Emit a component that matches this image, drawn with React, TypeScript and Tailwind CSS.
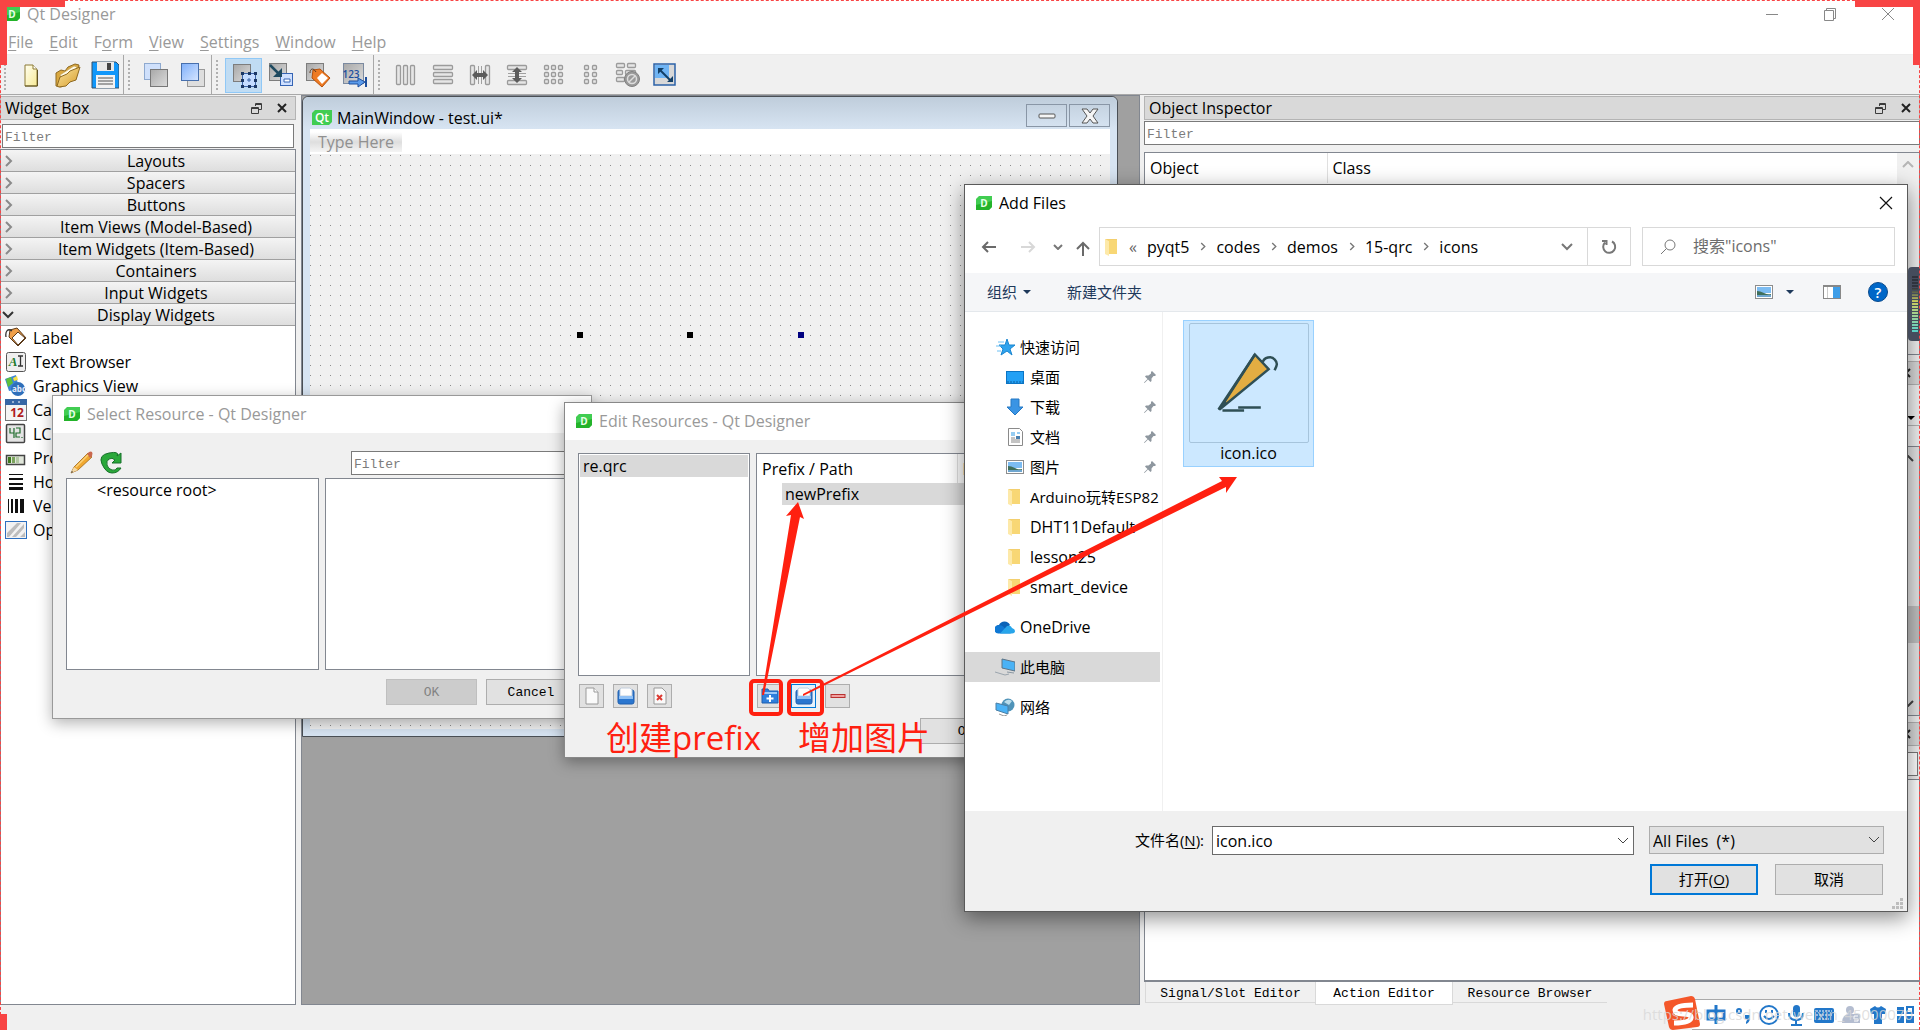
import type { ReactNode } from 'react';

const CATEGORIES = [
  'Layouts',
  'Spacers',
  'Buttons',
  'Item Views (Model-Based)',
  'Item Widgets (Item-Based)',
  'Containers',
  'Input Widgets',
];

const MENUS = ['File', 'Edit', 'Form', 'View', 'Settings', 'Window', 'Help'];

/* ─── Logos ─── */

function DesignerLogo() {
  return (
    <svg viewBox="0 0 16 14" className="w-4 h-[14px] shrink-0">
      <path d="M3 0h13v11l-3 3H0V3z" fill="#41cd52" />
      <path d="M0 9l16-4v6l-3 3H0z" fill="#17a81a" opacity=".7" />
      <text x="8" y="10.500" textAnchor="middle" fontSize="10" fontWeight="700" fill="#e8ffe8">D</text>
    </svg>
  );
}

function QtLogo() {
  return (
    <svg viewBox="0 0 20 15" className="w-5 h-[15px] shrink-0">
      <path d="M3 0h17v12l-3 3H0V3z" fill="#41cd52" />
      <text x="10" y="11.500" textAnchor="middle" fontSize="12" fontWeight="600" fill="#fff">Qt</text>
    </svg>
  );
}

/* ─── Toolbar icons, 28x28 ─── */

function Glyph({ children }: { children: ReactNode }) {
  return (
    <svg viewBox="0 0 28 28" className="w-7 h-7 shrink-0">
      <defs>
        <linearGradient id="gray" x1="0" y1="0" x2="1" y2="1">
          <stop offset="0" stopColor="#a8a8a8" />
          <stop offset="1" stopColor="#dcdcdc" />
        </linearGradient>
        <linearGradient id="blue" x1="0" y1="0" x2="1" y2="1">
          <stop offset="0" stopColor="#7fb0fb" />
          <stop offset="1" stopColor="#d6e5ff" />
        </linearGradient>
        <linearGradient id="gold" x1="0" y1="0" x2="1" y2="1">
          <stop offset="0" stopColor="#fbe7a4" />
          <stop offset="1" stopColor="#d79c2a" />
        </linearGradient>
        <linearGradient id="paper" x1="0" y1="0" x2="1" y2="1">
          <stop offset="0" stopColor="#fffef0" />
          <stop offset="1" stopColor="#f7ea96" />
        </linearGradient>
      </defs>
      {children}
    </svg>
  );
}

const bars = (rects: number[][]) =>
  rects.map(([x, y, w, h]) => (
    <rect key={`${x}-${y}`} x={x + 0.5} y={y + 0.5} width={w} height={h} rx="1" fill="#e6e6e6" stroke="#9b9b9b" strokeWidth="1.3" />
  ));

const NewIcon = () => (
  <Glyph>
    <path d="M8 4h8l4 4v17H8z" fill="url(#paper)" stroke="#8c7a35" />
    <path d="M16 4v4h4" fill="#fff" stroke="#8c7a35" />
    <path d="M8 25h12.500V9" fill="none" stroke="#5f5222" />
  </Glyph>
);
const OpenIcon = () => (
  <Glyph>
    <path d="M2 12l5-3 4 1 3-4 7-3 4 1-3 13-15 9-5-1z" fill="#d9a840" stroke="#8f6a22" />
    <path d="M6 14L20 5l3 1-2 4L8 18z" fill="#fffbe8" stroke="#c5a35a" strokeWidth=".7" />
    <path d="M3 25l3-9 7-3 3-3 10-4-4 13-6 2-4 4-7 1z" fill="url(#gold)" stroke="#8f6a22" />
  </Glyph>
);
const SaveIcon = () => (
  <Glyph>
    <path d="M2 1h23l3 3v23H1V1z" fill="#1197fa" stroke="#35516b" />
    <path d="M6 1h17v9H6z" fill="#e9e9e9" />
    <path d="M16 2h4v7h-4z" fill="#444" />
    <path d="M5 14h19v13H5z" fill="#f2f2f2" />
    <path d="M7 17h15M7 20h15M7 23h15" stroke="#888" strokeWidth="1.300" />
  </Glyph>
);
const BackIcon = () => (
  <Glyph>
    <rect x="2.5" y="2.500" width="16" height="16" fill="#cfe0fb" stroke="#8ea9cf" />
    <rect x="8.500" y="8.500" width="17" height="17" fill="url(#gray)" stroke="#777" />
  </Glyph>
);
const FrontIcon = () => (
  <Glyph>
    <rect x="8.500" y="8.500" width="17" height="17" fill="#dedede" stroke="#999" />
    <rect x="2.500" y="2.500" width="17" height="17" fill="url(#blue)" stroke="#4870ad" />
  </Glyph>
);
const EditWidgetsIcon = () => (
  <Glyph>
    <rect x="3.500" y="3.500" width="17" height="17" fill="url(#gray)" stroke="#7d7d7d" />
    <rect x="12.500" y="12.500" width="13" height="13" fill="#c4dcff" stroke="#3b64a8" />
    <path d="M11 11h3v3h-3zM18 11h3v3h-3zM24 11h3v3h-3zM11 18h3v3h-3zM24 18h3v3h-3zM11 24h3v3h-3zM18 24h3v3h-3zM24 24h3v3h-3z" fill="#1b3763" />
    <path d="M17 19h4M19 17v4" stroke="#3b64a8" />
  </Glyph>
);
const SignalIcon = () => (
  <Glyph>
    <rect x="2.500" y="2.500" width="17" height="17" fill="url(#gray)" stroke="#7d7d7d" />
    <rect x="13.500" y="12.500" width="12" height="12" fill="#cfe0ff" stroke="#3564b4" />
    <path d="M17 18h6v3h-6z" fill="#fff" stroke="#3564b4" />
    <path d="M3 4l9 9" stroke="#1f4a60" strokeWidth="2.500" />
    <path d="M15 16V7l-9 9z" fill="#1f4a60" />
  </Glyph>
);
const BuddyIcon = () => (
  <Glyph>
    <rect x="2.500" y="2.500" width="17" height="17" fill="url(#gray)" stroke="#7d7d7d" />
    <path d="M9 9l7-1 10 9-8 9-10-9z" fill="#ee7a22" stroke="#b5510c" />
    <path d="M18 12l6 5-6 6-5-6z" fill="#fff" />
    <path d="M12 11C9 6 6 8 6 12" fill="none" stroke="#5a3a22" />
  </Glyph>
);
const TabOrderIcon = () => (
  <Glyph>
    <rect x="2.500" y="2.500" width="20" height="20" fill="url(#gray)" stroke="#7b8aa0" />
    <text x="10" y="17" textAnchor="middle" fontSize="10" fontWeight="600" fill="#1d4f9e">123</text>
    <path d="M8 20h9v-3l7 4-7 5v-3H8z" fill="#5b9bea" stroke="#1d4f9e" />
    <path d="M25 16v10" stroke="#1d4f9e" strokeWidth="2" />
  </Glyph>
);
const HLayoutIcon = () => <Glyph>{bars([[4, 4, 4, 19], [11, 4, 4, 19], [18, 4, 4, 19]])}</Glyph>;
const VLayoutIcon = () => <Glyph>{bars([[4, 4, 19, 4], [4, 11, 19, 4], [4, 18, 19, 4]])}</Glyph>;
const HSplitIcon = () => (
  <Glyph>
    {bars([[4, 4, 4, 19], [19, 4, 4, 19]])}
    <path d="M12.500 5v18M15.500 5v18" stroke="#a0a0a0" />
    <path d="M6 14l5-5v3h6V9l5 5-5 5v-3h-6v3z" fill="#5c5c5c" />
  </Glyph>
);
const VSplitIcon = () => (
  <Glyph>
    {bars([[4, 4, 19, 4], [4, 19, 19, 4]])}
    <path d="M5 12.500h18M5 15.500h18" stroke="#a0a0a0" />
    <path d="M14 6l5 5h-3v6h3l-5 5-5-5h3v-6H9z" fill="#5c5c5c" />
  </Glyph>
);
const GridIcon = () => (
  <Glyph>
    {bars([4, 11, 18].flatMap((y) => [4, 11, 18].map((x) => [x, y, 4, 4])))}
  </Glyph>
);
const FormIcon = () => (
  <Glyph>{bars([4, 11, 18].flatMap((y) => [[7, y, 4, 4], [15, y, 4, 4]]))}</Glyph>
);
const BreakIcon = () => (
  <Glyph>
    {bars([[2, 2, 8, 4], [13, 2, 8, 4], [2, 9, 6, 4], [11, 9, 10, 4], [2, 16, 8, 4]])}
    <circle cx="18" cy="18" r="7.500" fill="#9a9a9a" stroke="#808080" />
    <circle cx="18" cy="18" r="4.500" fill="none" stroke="#ddd" strokeWidth="1.500" />
    <path d="M15 21l6-6" stroke="#ddd" strokeWidth="1.500" />
  </Glyph>
);
const AdjustIcon = () => (
  <Glyph>
    <rect x="3" y="3" width="21" height="21" fill="#d8d8d8" stroke="#2b62a8" strokeWidth="1.500" />
    <path d="M4 4h14v13H4z" fill="#6fb4f4" />
    <path d="M9 9l10 10" stroke="#123f66" strokeWidth="2" />
    <path d="M7 7v6l6-6zM22 21v-6l-6 6z" fill="#123f66" />
  </Glyph>
);

const TOOL_GROUPS = [
  [
    { name: 'New', Icon: NewIcon },
    { name: 'Open', Icon: OpenIcon },
    { name: 'Save', Icon: SaveIcon },
  ],
  [
    { name: 'Send to Back', Icon: BackIcon },
    { name: 'Bring to Front', Icon: FrontIcon },
  ],
  [
    { name: 'Edit Widgets', Icon: EditWidgetsIcon, active: true },
    { name: 'Edit Signals/Slots', Icon: SignalIcon },
    { name: 'Edit Buddies', Icon: BuddyIcon },
    { name: 'Edit Tab Order', Icon: TabOrderIcon },
  ],
  [
    { name: 'Lay Out Horizontally', Icon: HLayoutIcon },
    { name: 'Lay Out Vertically', Icon: VLayoutIcon },
    { name: 'Horizontal Splitter', Icon: HSplitIcon },
    { name: 'Vertical Splitter', Icon: VSplitIcon },
    { name: 'Lay Out in a Grid', Icon: GridIcon },
    { name: 'Lay Out in a Form', Icon: FormIcon },
    { name: 'Break Layout', Icon: BreakIcon },
    { name: 'Adjust Size', Icon: AdjustIcon },
  ],
];

/* ─── Widget box icons, 22x22 ─── */

const WIDGETS: { name: string; icon: ReactNode }[] = [
  {
    name: 'Label',
    icon: (
      <>
        <path d="M5 3l7-2 9 10-8 8-9-9z" fill="#f0a04a" stroke="#5b3a1a" />
        <path d="M13 5l7 6-7 7-6-7z" fill="#fff" stroke="#5b3a1a" />
        <path d="M7 4C3 1 0 4 1 10" fill="none" stroke="#333" strokeWidth="1.300" />
      </>
    ),
  },
  {
    name: 'Text Browser',
    icon: (
      <>
        <rect x="1.500" y="1.500" width="19" height="19" rx="2" fill="#eee" stroke="#555" />
        <text x="8" y="15" textAnchor="middle" fontSize="13" fontStyle="italic" fontWeight="700" className="font-['Liberation_Serif',serif]" fill="#1c7a2c">A</text>
        <path d="M13 5h5M13 15h5M15.500 5v10" stroke="#333" strokeWidth="1.300" />
      </>
    ),
  },
  {
    name: 'Graphics View',
    icon: (
      <>
        <path d="M0 4l11-4 3 14-10 2z" fill="#3c86d8" />
        <path d="M1 4l5-2 2 6-5 4z" fill="#5fc03a" />
        <path d="M8 3l4-2 1 4-4 1z" fill="#f5e04a" />
        <circle cx="13" cy="14" r="7" fill="#2f6fba" />
        <text x="14" y="17" textAnchor="middle" fontSize="8" fontWeight="700" fill="#e8eefc">abc</text>
      </>
    ),
  },
  {
    name: 'Cal',
    icon: (
      <>
        <rect x=".500" y=".500" width="21" height="21" fill="#f4f4f4" stroke="#777" />
        <path d="M0 0h22v6H0z" fill="#3566a5" />
        <path d="M7 3h2M13 3h2" stroke="#fff" />
        <text x="12" y="18" textAnchor="middle" fontSize="12" fontWeight="700" fill="#b01c1c">12</text>
      </>
    ),
  },
  {
    name: 'LCD',
    icon: (
      <>
        <rect x="1.500" y="1.500" width="18" height="18" rx="1" fill="#e4e4e4" stroke="#444" strokeWidth="1.500" />
        <path d="M5 5v5h4M9 5v10M11 5h4v5h-4v4h4M17 14v1" fill="none" stroke="#1d6b2a" strokeWidth="1.200" />
      </>
    ),
  },
  {
    name: 'Pro',
    icon: (
      <>
        <rect x="1.500" y="8.500" width="18" height="9" fill="#e0e6da" stroke="#444" strokeWidth="1.500" />
        <path d="M3 10h3v6H3z" fill="#3f7a1c" />
        <path d="M7 10h3v6H7z" fill="#7ba35e" />
        <path d="M11 10h3v6h-3z" fill="#b3c8a4" />
      </>
    ),
  },
  {
    name: 'Ho',
    icon: <path d="M4 3h14v1H4zM4 7h14v2H4zM4 12h14v2H4zM4 16h14v3H4z" fill="#111" />,
  },
  {
    name: 'Ve',
    icon: <path d="M3 4h1v14H3zM6 4h2v14H6zM10 4h3v14h-3zM15 4h4v14h-4z" fill="#111" />,
  },
  {
    name: 'Op',
    icon: (
      <>
        <rect x=".500" y="2.500" width="21" height="17" fill="#f2f2f2" stroke="#2c6fc0" />
        <path d="M2 14L12 4h4L4 18H2zM7 18L19 5v4l-8 9zM15 18l5-5v5z" fill="#bdbdbd" />
      </>
    ),
  },
];

/* ─── Dock pieces ─── */

function DockHeader({ title }: { title: string }) {
  return (
    <div className="flex h-6 shrink-0 items-center border border-[#b4b4b4] bg-[#d9d9d9] px-1">
      <span className="flex-1">{title}</span>
      <button type="button" aria-label="Float" className="mr-[10px] flex h-5 w-4 items-center justify-center">
        <svg viewBox="0 0 11 11" className="h-[11px] w-[11px]" fill="none" stroke="#3c3c3c">
          <path d="M4.500 3V.500h6v6H8M4 1.500h7" />
          <path d="M.500 4.500h7v6h-7zM0 5.500h8" />
        </svg>
      </button>
      <button type="button" aria-label="Close" className="mr-px flex h-5 w-4 items-center justify-center">
        <svg viewBox="0 0 10 10" className="h-[10px] w-[10px]" stroke="#222" strokeWidth="2">
          <path d="M1 1l8 8M9 1l-8 8" />
        </svg>
      </button>
    </div>
  );
}

function FilterBox({ label }: { label: string }) {
  return (
    <input
      type="text"
      aria-label={label}
      placeholder="Filter"
      className="block h-6 w-full border border-[#7a7a7a] bg-white px-[2px] pt-[2px] font-['Liberation_Mono',monospace] text-[13px] outline-none placeholder:text-[#7c7c7c]"
    />
  );
}

function WidgetBox() {
  return (
    <aside className="flex w-[296px] shrink-0 flex-col pt-px">
      <DockHeader title="Widget Box" />
      <div className="px-[2px] pt-1 pb-px">
        <FilterBox label="Widget filter" />
      </div>
      <div className="min-h-0 flex-1 overflow-hidden border border-[#828790] bg-white">
        {CATEGORIES.map((c) => (
          <button
            key={c}
            type="button"
            className="flex h-[22px] w-full items-center border-b border-[#a0a0a0] bg-linear-to-b from-[#f4f4f4] to-[#dedede]"
          >
            <svg viewBox="0 0 16 12" className="h-3 w-4 shrink-0" fill="none" stroke="#8a8a8a" strokeWidth="2">
              <path d="M5 1l5 5-5 5" />
            </svg>
            <span className="flex-1">{c}</span>
          </button>
        ))}
        <button
          type="button"
          className="flex h-[22px] w-full items-center border-b border-[#a0a0a0] bg-linear-to-b from-[#f4f4f4] to-[#dedede]"
        >
          <svg viewBox="0 0 16 12" className="h-3 w-4 shrink-0" fill="none" stroke="#333" strokeWidth="2">
            <path d="M2 3l5 5 5-5" />
          </svg>
          <span className="flex-1">Display Widgets</span>
        </button>
        <ul>
          {WIDGETS.map((w) => (
            <li key={w.name} className="flex h-6 items-center gap-[6px] pl-1">
              <svg viewBox="0 0 22 22" className="h-[22px] w-[22px] shrink-0">{w.icon}</svg>
              <span>{w.name}</span>
            </li>
          ))}
        </ul>
      </div>
    </aside>
  );
}

function FormWindow() {
  return (
    <section className="absolute top-0 left-0 flex h-[641px] w-[816px] flex-col rounded-t-md border border-[#4a4f55] bg-[#d7e4f2] px-[7px] pb-[7px]">
      <header className="-mx-[7px] flex h-8 shrink-0 items-center rounded-t-md bg-linear-to-b from-[#bfcddb] to-[#d7e4f2] pt-[5px] pr-[7px] pl-[9px]">
        <h2 className="flex flex-1 items-center gap-[5px] pt-1">
          <QtLogo />
          MainWindow - test.ui*
        </h2>
        <div className="flex gap-[2px]">
          <button type="button" aria-label="Minimize" className="flex h-[23px] w-[41px] items-center justify-center border border-[#8996a6]">
            <svg viewBox="0 0 18 6" className="h-[6px] w-[18px]">
              <rect x="1" y="1" width="16" height="4" rx="1" fill="#f5f5f5" stroke="#555" />
            </svg>
          </button>
          <button type="button" aria-label="Close" className="flex h-[23px] w-[41px] items-center justify-center border border-[#8996a6]">
            <svg viewBox="0 0 18 16" className="h-4 w-[18px]">
              <path d="M1 1h5l3 4 3-4h5l-5 7 5 7h-5l-3-4-3 4H1l5-7z" fill="#f5f5f5" stroke="#555" />
            </svg>
          </button>
        </div>
      </header>
      <div className="flex h-[25px] shrink-0 items-center bg-white">
        <button type="button" className="h-5 bg-linear-to-b from-white via-[#dedede] to-[#f4f4f4] px-2 leading-5 text-[#909090]">
          Type Here
        </button>
      </div>
      <div className="relative flex-1 overflow-hidden bg-[#f0f0f0]">
        <svg className="absolute inset-0 h-full w-full">
          <defs>
            <pattern id="dots" width="10" height="10" patternUnits="userSpaceOnUse">
              <rect x="0" y="1" width="1" height="1" fill="#8d8d8d" />
            </pattern>
          </defs>
          <rect width="100%" height="100%" fill="url(#dots)" />
          <rect x="267" y="178" width="6" height="6" fill="#000" />
          <rect x="377" y="178" width="6" height="6" fill="#000" />
          <rect x="488" y="178" width="6" height="6" fill="#000080" />
        </svg>
      </div>
    </section>
  );
}

function RightDock() {
  return (
    <aside className="ml-1 flex w-[776px] shrink-0 flex-col pt-px">
      <div className="flex h-[265px] shrink-0 flex-col pb-[6px]">
        <DockHeader title="Object Inspector" />
        <div className="pt-px pb-[7px]">
          <FilterBox label="Object filter" />
        </div>
        <div className="flex min-h-0 flex-1 items-start border border-[#828790] bg-white">
          <table className="flex-1 table-fixed border-collapse text-left">
            <thead>
              <tr className="h-[30px]">
                <th className="w-[182px] border-r border-[#e0e0e0] pl-[5px] font-normal">Object</th>
                <th className="pl-[5px] font-normal">Class</th>
              </tr>
            </thead>
          </table>
          <div className="flex w-[22px] justify-center self-stretch bg-[#f0f0f0] pt-2">
            <svg viewBox="0 0 12 7" className="h-[7px] w-3" fill="none" stroke="#b5b5b5" strokeWidth="2">
              <path d="M1 6l5-5 5 5" />
            </svg>
          </div>
        </div>
      </div>
      <div className="flex h-[361px] shrink-0 flex-col pb-[6px]">
        <DockHeader title="" />
        <div className="flex flex-1 items-end justify-end border-b border-[#b4b4b4] pr-[5px] pb-[5px]">
          <svg viewBox="0 0 8 4" className="h-1 w-2"><path d="M0 0h8L4 4z" /></svg>
        </div>
        <div className="h-5" />
        <div className="flex h-[270px] justify-end border border-[#828790] bg-white">
          <div className="flex w-[22px] flex-col items-center bg-[#e4e4e4] py-2">
            <svg viewBox="0 0 12 7" className="h-[7px] w-3" fill="none" stroke="#444" strokeWidth="2">
              <path d="M1 6l5-5 5 5" />
            </svg>
            <div className="mt-36 h-[37px] w-full bg-[#c0c0c0]" />
            <svg viewBox="0 0 12 7" className="mt-auto h-[7px] w-3" fill="none" stroke="#444" strokeWidth="2">
              <path d="M1 1l5 5 5-5" />
            </svg>
          </div>
        </div>
      </div>
      <div className="flex min-h-0 flex-1 flex-col">
        <DockHeader title="" />
        <div className="pt-[6px] pr-[2px] pb-[3px]">
          <div className="h-6 border border-[#7a7a7a] bg-white" />
        </div>
        <div className="flex-1 border border-[#828790] border-b-2 bg-white" />
      </div>
      <div role="tablist" className="flex h-[23px] shrink-0 items-start pl-px font-['Liberation_Mono',monospace] text-[13px]">
        <button type="button" role="tab" className="h-[21px] w-[170px] border-b border-l border-[#d9d9d9] pt-[2px]">Signal/Slot Editor</button>
        <button type="button" role="tab" aria-selected className="h-[23px] w-[138px] border-r border-b border-l border-[#d9d9d9] bg-white pt-[2px]">Action Editor</button>
        <button type="button" role="tab" className="h-[21px] w-[154px] border-b border-[#d9d9d9] pt-[2px]">Resource Browser</button>
      </div>
    </aside>
  );
}

/* ─── Select Resource dialog ─── */

function SelectResourceDialog() {
  return (
    <section className="absolute top-[395px] left-[52px] flex h-[324px] w-[540px] flex-col border border-[#999] bg-[#f0f0f0] shadow-[0_4px_14px_rgba(0,0,0,0.3)]">
      <header className="flex h-[37px] shrink-0 items-center gap-[7px] bg-white pb-[2px] pl-[11px] text-[#999]">
        <DesignerLogo />
        <h2>Select Resource - Qt Designer</h2>
      </header>
      <div className="flex items-end justify-between px-[13px] pt-[18px]">
        <div className="flex gap-[6px] pl-1">
          <button type="button" aria-label="Edit Resources">
            <svg viewBox="0 0 24 24" className="h-6 w-6">
              <path d="M1 22l3-6L18 2l4 4L8 19z" fill="#f0a830" stroke="#a0671a" strokeWidth=".8" />
              <path d="M17 3l2-2q2-1 3 0t0 4l-2 2z" fill="#c9684f" />
              <path d="M1 22l3-6 4 3z" fill="#f3d9a8" />
              <path d="M1 22l1-2 1 1z" fill="#333" />
              <path d="M6 16L18 4" stroke="#fbd27a" strokeWidth="1.500" />
            </svg>
          </button>
          <button type="button" aria-label="Reload">
            <svg viewBox="0 0 24 24" className="h-6 w-6">
              <path d="M21 2v10h-9l3-3q-3-3-6-1t-2 6 5 5 5-2h4q-3 5-9 5T2 13 9 2t8 3z" fill="#2aa83a" stroke="#17702a" />
            </svg>
          </button>
        </div>
        <div className="w-[227px]">
          <FilterBox label="Resource filter" />
        </div>
      </div>
      <div className="grid h-[195px] grid-cols-[253px_1fr] gap-[6px] px-[13px] pt-[3px]">
        <div className="border border-[#828790] bg-white pl-[30px] leading-[23px]">&lt;resource root&gt;</div>
        <div className="border border-[#828790] bg-white" />
      </div>
      <div className="flex justify-end gap-[9px] pt-[9px] pr-[15px] font-['Liberation_Mono',monospace] text-[13px]">
        <button type="button" disabled className="h-[26px] w-[91px] border border-[#bfbfbf] bg-[#ccc] pt-[2px] text-[#838383]">OK</button>
        <button type="button" className="h-[26px] w-[90px] border border-[#adadad] bg-[#e1e1e1] pt-[2px]">Cancel</button>
      </div>
    </section>
  );
}

/* ─── Edit Resources dialog ─── */

const TrayIcon = () => (
  <>
    <path d="M1 5q0-2 2-2h12q2 0 2 2v10q0 2-2 2H3q-2 0-2-2z" fill="#2a76cf" stroke="#1f5fae" />
    <path d="M4 1h9l2 2v6H3V2z" fill="#fdfdfd" stroke="#c2cedd" />
    <path d="M2 9h14v3H2z" fill="#8fc0f5" />
  </>
);

function ResourceButton({ label, focused, children }: { label: string; focused?: boolean; children: ReactNode }) {
  return (
    <button
      type="button"
      aria-label={label}
      className={`flex h-6 w-[25px] items-center justify-center border ${focused ? 'border-[#0078d7] bg-[#e5f1fb]' : 'border-[#adadad] bg-[#e1e1e1]'}`}
    >
      <svg viewBox="0 0 18 18" className="h-[18px] w-[18px]">{children}</svg>
    </button>
  );
}

function EditResourcesDialog() {
  return (
    <section className="absolute top-[402px] left-[564px] flex h-[356px] w-[560px] flex-col border border-[#888] bg-[#f0f0f0] shadow-[0_4px_14px_rgba(0,0,0,0.35)]">
      <header className="flex h-[37px] shrink-0 items-center gap-[7px] bg-white pb-[2px] pl-[11px] text-[#999]">
        <DesignerLogo />
        <h2>Edit Resources - Qt Designer</h2>
      </header>
      <div className="grid grid-cols-[172px_1fr] gap-[6px] px-[13px] pt-[13px]">
        <div className="flex flex-col gap-2">
          <ul className="h-[223px] border border-[#828790] bg-white p-px">
            <li className="h-[22px] bg-[#d9d9d9] pl-[3px] leading-[22px]">re.qrc</li>
          </ul>
          <div className="flex gap-[9px] pl-px">
            <ResourceButton label="New resource file">
              <path d="M3 1h8l4 4v12H3z" fill="#fafafa" stroke="#999" />
              <path d="M11 1v4h4" fill="#fff" stroke="#999" />
            </ResourceButton>
            <ResourceButton label="Open resource file"><TrayIcon /></ResourceButton>
            <ResourceButton label="Remove resource file">
              <path d="M3 1h8l4 4v12H3z" fill="#fafafa" stroke="#999" />
              <path d="M6 8l5 5M11 8l-5 5" stroke="#dc3a32" strokeWidth="2" />
            </ResourceButton>
          </div>
        </div>
        <div className="flex flex-col gap-2">
          <div className="h-[223px] border border-[#828790] bg-white">
            <table className="w-full table-fixed border-collapse text-left">
              <thead>
                <tr className="h-[29px]">
                  <th className="w-[200px] border-r border-[#e0e0e0] pl-[5px] font-normal">Prefix / Path</th>
                  <th className="pl-[5px] font-normal">L</th>
                </tr>
              </thead>
              <tbody>
                <tr className="h-[22px]">
                  <td colSpan={2} className="pl-[25px]">
                    <div className="bg-[#d9d9d9] pl-[3px] leading-[22px]">newPrefix</div>
                  </td>
                </tr>
              </tbody>
            </table>
          </div>
          <div className="flex gap-[9px] pl-px">
            <ResourceButton label="Add Prefix">
              <path d="M1 2h6l1 2h9v12H1z" fill="#2f7fdc" stroke="#1f5fae" />
              <path d="M2 5h14v2H2z" fill="#9cc8f8" />
              <path d="M9 8v7M5.500 11.500h7" stroke="#fff" strokeWidth="2" />
            </ResourceButton>
            <ResourceButton label="Add Files" focused><TrayIcon /></ResourceButton>
            <ResourceButton label="Remove">
              <rect x="2" y="7.500" width="14" height="3" fill="#f0a0a0" stroke="#b8312f" />
            </ResourceButton>
          </div>
        </div>
      </div>
      <div className="flex justify-end gap-[9px] pt-[10px] pr-[13px] font-['Liberation_Mono',monospace] text-[13px]">
        <button type="button" className="h-[26px] w-[91px] border border-[#adadad] bg-[#e1e1e1] pt-[2px]">OK</button>
        <button type="button" className="h-[26px] w-[90px] border border-[#adadad] bg-[#e1e1e1] pt-[2px]">Cancel</button>
      </div>
    </section>
  );
}

/* ─── Add Files dialog ─── */

const CRUMBS = ['pyqt5', 'codes', 'demos', '15-qrc', 'icons'];

const FolderArt = () => (
  <>
    <path d="M2 1h12v15h-4z" fill="#f3cf6e" />
    <path d="M6 2h8v14H6z" fill="#f8d775" />
    <path d="M2 1l4 2v15l-4-2z" fill="#fde9a9" />
  </>
);

function PictureArt() {
  return (
    <>
      <rect x=".500" y="2.500" width="17" height="13" fill="#fff" stroke="#8d8d8d" />
      <path d="M2 4h14v6H2z" fill="#7cbcf2" />
      <path d="M2 8q3 0 7 2t7 1v2H2z" fill="#3f6f5c" />
      <path d="M2 12h14v2H2z" fill="#6fa6cf" />
    </>
  );
}

const PLACES: { name: string; pinned?: boolean; small?: boolean; icon: ReactNode }[] = [
  {
    name: '桌面',
    pinned: true,
    small: true,
    icon: (
      <>
        <rect x=".500" y="3.500" width="17" height="12" fill="#22a0f5" stroke="#0b74c4" />
        <path d="M1 14h16" stroke="#0c5e9e" strokeDasharray="2 1" />
      </>
    ),
  },
  {
    name: '下载',
    pinned: true,
    small: true,
    icon: <path d="M5 1h8v8h4l-8 8-8-8h4z" fill="#3a94e4" stroke="#2478c4" />,
  },
  {
    name: '文档',
    pinned: true,
    small: true,
    icon: (
      <>
        <path d="M2.500 .500h11l3 3v14h-14z" fill="#fff" stroke="#8a8a8a" />
        <path d="M5 5h4M5 7h4M11 5h3" stroke="#2e9be6" />
        <path d="M5 10h4M5 12h9M5 14h9" stroke="#888" />
        <path d="M10 8h4v3h-4z" fill="#4a80b0" />
      </>
    ),
  },
  { name: '图片', pinned: true, small: true, icon: <PictureArt /> },
  { name: 'Arduino玩转ESP82', small: true, icon: <FolderArt /> },
  { name: 'DHT11Default', icon: <FolderArt /> },
  { name: 'lesson25', icon: <FolderArt /> },
  { name: 'smart_device', icon: <FolderArt /> },
];

const Crumb = () => (
  <svg viewBox="0 0 6 10" className="h-[9px] w-[6px]" fill="none" stroke="#777" strokeWidth="1.500">
    <path d="M1 1l4 4-4 4" />
  </svg>
);

function AddFilesDialog() {
  return (
    <section className="absolute top-[184px] left-[964px] flex h-[728px] w-[944px] flex-col border border-[#5a5a5a] bg-white shadow-[0_6px_20px_rgba(0,0,0,0.45)]">
      <header className="flex h-[38px] shrink-0 items-center gap-[7px] pr-[14px] pb-[2px] pl-[11px]">
        <DesignerLogo />
        <h2 className="flex-1">Add Files</h2>
        <button type="button" aria-label="Close">
          <svg viewBox="0 0 14 14" className="h-[14px] w-[14px]" stroke="#111" strokeWidth="1.200">
            <path d="M1 1l12 12M13 1L1 13" />
          </svg>
        </button>
      </header>

      <div className="flex h-[50px] shrink-0 items-center pt-[4px] pr-3 pb-[7px] pl-4">
        <div className="flex w-[118px] items-center">
          <button type="button" aria-label="Back">
            <svg viewBox="0 0 16 16" className="h-4 w-4" fill="none" stroke="#6a6a6a" strokeWidth="2">
              <path d="M15 8H2M7 3L2 8l5 5" />
            </svg>
          </button>
          <button type="button" aria-label="Forward" className="ml-[23px]">
            <svg viewBox="0 0 16 16" className="h-4 w-4" fill="none" stroke="#d8d8d8" strokeWidth="2">
              <path d="M1 8h13M9 3l5 5-5 5" />
            </svg>
          </button>
          <button type="button" aria-label="Recent" className="ml-[17px]">
            <svg viewBox="0 0 10 6" className="h-[6px] w-[10px]" fill="none" stroke="#777" strokeWidth="2">
              <path d="M1 1l4 4 4-4" />
            </svg>
          </button>
          <button type="button" aria-label="Up" className="ml-3 pt-1">
            <svg viewBox="0 0 16 16" className="h-4 w-4" fill="none" stroke="#6a6a6a" strokeWidth="2">
              <path d="M8 15V2M2 8l6-6 6 6" />
            </svg>
          </button>
        </div>
        <nav className="flex h-[39px] flex-1 items-center border border-[#d9d9d9] pl-[3px]">
          <svg viewBox="0 0 18 18" className="h-[18px] w-[18px]"><FolderArt /></svg>
          <span className="mr-[10px] ml-2 text-[#666]">«</span>
          {CRUMBS.map((c, i) => (
            <span key={c} className="flex items-center">
              {i > 0 && <span className="mr-[10px] ml-[11px]"><Crumb /></span>}
              <a href="#">{c}</a>
            </span>
          ))}
          <button type="button" aria-label="Previous locations" className="mr-[14px] ml-auto">
            <svg viewBox="0 0 12 8" className="h-2 w-3" fill="none" stroke="#777" strokeWidth="2">
              <path d="M1 1l5 5 5-5" />
            </svg>
          </button>
          <button type="button" aria-label="Refresh" className="flex h-full w-[43px] items-center justify-center border-l border-[#d9d9d9]">
            <svg viewBox="0 0 16 16" className="h-4 w-4" fill="none" stroke="#777" strokeWidth="2">
              <path d="M11 2.500A6 6 0 1 1 4 3.500M1 2h4.500v4" />
            </svg>
          </button>
        </nav>
        <label className="ml-[11px] flex h-[39px] w-[253px] items-center border border-[#d9d9d9] pl-[17px]">
          <svg viewBox="0 0 16 16" className="h-4 w-4 shrink-0" fill="none" stroke="#777">
            <circle cx="10" cy="6" r="5" />
            <path d="M6.500 9.500L1 15" />
          </svg>
          <input type="search" aria-label="Search" placeholder={'搜索"icons"'} className="w-40 pb-px pl-[17px] outline-none placeholder:text-[#6d6d6d]" />
        </label>
      </div>

      <div className="flex h-[39px] shrink-0 items-center border-b border-[#e4e8ec] bg-[#f5f6f8] pr-[19px] pl-[22px] text-[15px] text-[#1e395b]">
        <button type="button" className="flex items-center gap-[6px]">
          组织
          <svg viewBox="0 0 8 4" className="h-1 w-2" fill="#1e395b"><path d="M0 0h8L4 4z" /></svg>
        </button>
        <button type="button" className="mr-auto ml-9">新建文件夹</button>
        <button type="button" aria-label="View" className="flex items-center gap-[13px]">
          <svg viewBox="0 0 18 18" className="h-[18px] w-[18px]"><PictureArt /></svg>
          <svg viewBox="0 0 8 4" className="h-1 w-2" fill="#1e395b"><path d="M0 0h8L4 4z" /></svg>
        </button>
        <button type="button" aria-label="Preview pane" className="ml-[29px]">
          <svg viewBox="0 0 18 14" className="h-[14px] w-[18px]">
            <rect x=".500" y=".500" width="17" height="13" fill="#fff" stroke="#888" />
            <path d="M0 0h18v2H0z" fill="#888" />
            <path d="M4.500 2v11" stroke="#ccc" />
            <path d="M10 2h7v11h-7z" fill="#3f9ee8" />
          </svg>
        </button>
        <button type="button" aria-label="Help" className="ml-[27px] flex h-5 w-5 items-center justify-center rounded-full border border-[#0a4a8c] bg-[#0067c8] font-semibold text-white">
          ?
        </button>
      </div>

      <div className="flex min-h-0 flex-1">
        <nav className="w-[198px] shrink-0 border-r border-[#f0f0f0] pt-5 pr-[2px]">
          <div className="flex h-[30px] items-center gap-1 pl-[31px] text-[15px]">
            <svg viewBox="0 0 20 18" className="h-[18px] w-5">
              <path d="M11 1l2 6 6 0-5 4 2 6-5-4-6 4 2-6-4-4h6z" fill="#2ea3ee" stroke="#1b86d0" />
              <path d="M2 4h6M0 8h5M1 13h4" stroke="#6cc0f4" />
            </svg>
            快速访问
          </div>
          {PLACES.map((p) => (
            <div key={p.name} className={`flex h-[30px] items-center gap-[6px] pl-[41px] whitespace-nowrap ${p.small ? 'text-[15px]' : ''}`}>
              <svg viewBox="0 0 18 18" className="h-[18px] w-[18px] shrink-0">{p.icon}</svg>
              <span>{p.name}</span>
              {p.pinned && (
                <svg viewBox="0 0 12 12" className="mr-1 ml-auto h-3 w-3" fill="#8e979f">
                  <path d="M8 0l4 4-1 1H9.500L7.500 7.500V10l-1 1L4 8.500 .500 12 0 11.500 3.500 8 1 5.500l1-1h2.500L7 2.500V1z" />
                </svg>
              )}
            </div>
          ))}
          <div className="mt-[10px] flex h-[30px] items-center gap-[5px] pl-[30px]">
            <svg viewBox="0 0 20 14" className="h-[14px] w-5">
              <path d="M4 13a4 4 0 0 1 0-8 6 6 0 0 1 11 0l-5 5z" fill="#0a63b8" />
              <path d="M4 13.500a4 4 0 0 1-1-8q3-1 5 1l8 7z" fill="#0f78d4" />
              <path d="M5 13.500L12 6q4-1 5 2 3 1 3 3t-3 2.500z" fill="#28a5ea" />
            </svg>
            OneDrive
          </div>
          <div className="mt-[10px] flex h-[30px] items-center gap-[5px] bg-[#d9d9d9] pl-[30px] text-[15px]">
            <svg viewBox="0 0 20 18" className="h-[18px] w-5">
              <path d="M7 1l13 3v9L7 10z" fill="#4ab2f5" stroke="#5d7486" />
              <path d="M12 14l7 1" stroke="#8b98a3" />
              <path d="M0 14l10 3 4-1" fill="none" stroke="#9aa4ad" />
            </svg>
            此电脑
          </div>
          <div className="mt-[10px] flex h-[30px] items-center gap-[5px] pl-[30px] text-[15px]">
            <svg viewBox="0 0 20 18" className="h-[18px] w-5">
              <circle cx="13" cy="7" r="6.500" fill="#4f93b8" />
              <path d="M9 4q4-4 8-1l-3 4z" fill="#b9dceb" />
              <path d="M1 5l12 3v8L1 12z" fill="#4ab2f5" stroke="#4a7fa5" />
              <path d="M4 16l5 2 3-1" stroke="#999" fill="none" />
            </svg>
            网络
          </div>
        </nav>
        <div className="flex-1 pt-2 pl-5">
          <button type="button" className="flex h-[147px] w-[131px] flex-col items-center border border-[#99d1ff] bg-[#cce8ff] pt-[2px]">
            <span className="h-[120px] w-[120px] rounded-xs border border-[#a6c4dc]">
              <svg viewBox="2 0 120 120" className="h-full w-full" fill="none" stroke="#2f4f55" strokeWidth="2.500">
                <path d="M68 31l14 15-50 41z" fill="#e3ad42" />
                <path d="M68 31L31 87l8-7" />
                <path d="M76 39c1-5 9-7 12-3 4 4 2 7 0 11" />
                <path d="M35 88h22M51 85h23" />
              </svg>
            </span>
            <span className="leading-5">icon.ico</span>
          </button>
        </div>
      </div>

      <footer className="relative h-[100px] shrink-0 bg-[#f0f0f0] pt-[15px] pr-[23px]">
        <div className="flex items-start justify-end">
          <label htmlFor="file-name" className="mr-2 text-[15px] leading-[29px]">
            文件名(<u className="underline-offset-2">N</u>):
          </label>
          <div className="flex h-[29px] w-[422px] items-center border border-[#6a6a6a] bg-white pr-1">
            <input id="file-name" type="text" defaultValue="icon.ico" className="min-w-0 flex-1 pl-[3px] outline-none" />
            <svg viewBox="0 0 12 8" className="h-2 w-3" fill="none" stroke="#444">
              <path d="M1 1l5 5 5-5" />
            </svg>
          </div>
          <div className="relative ml-[15px]">
            <select aria-label="File type" className="block h-7 w-[235px] appearance-none border border-[#adadad] bg-[#e1e1e1] pt-px pl-[3px]">
              <option>{'All Files\u00a0 (*)'}</option>
            </select>
            <svg viewBox="0 0 12 8" className="pointer-events-none absolute top-[10px] right-1 h-2 w-3" fill="none" stroke="#444">
              <path d="M1 1l5 5 5-5" />
            </svg>
          </div>
        </div>
        <div className="flex justify-end gap-[17px] pt-[9px] pr-px text-[15px]">
          <button type="button" className="h-[31px] w-[108px] border-2 border-[#0078d7] bg-[#e1e1e1] pb-[2px]">
            打开(<u className="underline-offset-2">O</u>)
          </button>
          <button type="button" className="h-[31px] w-[108px] border border-[#adadad] bg-[#e1e1e1] pb-[2px]">取消</button>
        </div>
        <svg viewBox="0 0 11 11" className="absolute right-1 bottom-[2px] h-[11px] w-[11px]" fill="#bdbdbd">
          <path d="M8 0h3v3H8zM4 4h3v3H4zM8 4h3v3H8zM0 8h3v3H0zM4 8h3v3H4zM8 8h3v3H8z" />
        </svg>
      </footer>
    </section>
  );
}

/* ─── Red annotations drawn over the windows ─── */

function Annotations() {
  return (
    <div className="pointer-events-none absolute inset-0 overflow-hidden">
      <svg className="absolute inset-0 h-full w-full" fill="#ff2010">
        <rect x="751" y="681" width="30" height="33" rx="3" fill="none" stroke="#ff2010" strokeWidth="4" />
        <rect x="789" y="681" width="33" height="33" rx="3" fill="none" stroke="#ff2010" strokeWidth="4" />
        <path d="M798 502L786 516l5-1-29 180h2l36-178 4 2z" />
        <path d="M1237 477l-18 0 3 4L803 694v2l423-209v6z" />
      </svg>
      <span className="absolute top-[715px] left-[606px] text-[33px] leading-[46px] text-[#ff2010]">创建prefix</span>
      <span className="absolute top-[715px] left-[798px] text-[33px] leading-[46px] text-[#ff2010]">增加图片</span>
    </div>
  );
}

/* ─── Floating input-method bar ─── */

function ImeBar() {
  return (
    <div className="absolute right-0 bottom-0 flex h-[31px] w-[256px] items-center">
      <div className="absolute inset-y-0 right-0 left-7 border-y border-[#aaa] bg-white" />
      <svg viewBox="0 0 256 34" className="absolute right-0 bottom-0 h-[34px] w-[256px]" fill="#2277c9">
        <path d="M3 5L27 0q3 0 4 3l5 25q0 3-3 3L9 34q-3 0-4-3L0 8q0-3 3-3z" fill="#f4572a" />
        <path d="M29 9Q12 9 11 14q0 4 8 4 9 0 8 4-1 5-17 5" fill="none" stroke="#fff" strokeWidth="5" />
        <g fill="none" stroke="#2277c9" strokeWidth="3">
          <path d="M44 15h16v8H44zM52 9v19" />
          <circle cx="75" cy="15" r="2" strokeWidth="2" />
          <circle cx="105" cy="19" r="9" strokeWidth="2" />
          <path d="M100 20q5 6 10 0M102 14v3M108 14v3" strokeWidth="2" />
          <path d="M125 17q0 7 7 7t7-7M132 24v5M127 29h11" strokeWidth="2" />
        </g>
        <path d="M81 19h5v4q-1 4-4 5v-2q1-1 1-3h-2z" />
        <rect x="129" y="9" width="7" height="12" rx="3.500" />
        <rect x="150" y="12" width="20" height="15" rx="2" />
        <path d="M152 15h16M152 19h16M155 23h10" stroke="#fff" strokeDasharray="2 1" />
        <g fill="#b4bdd0">
          <circle cx="186" cy="14" r="4" />
          <path d="M178 27q0-9 8-9h10v9z" />
          <path d="M194 20h-4v3h4v2h-4" fill="none" stroke="#fff" />
        </g>
        <path d="M206 13l5-3q3 3 6 0l5 3-1 5h-3v10h-8V18h-3z" />
        <path d="M233 11h7v7h-7zM233 20h7v7h-7zM242 20h8v7h-8z" />
        <rect x="243" y="11" width="6" height="6" fill="none" stroke="#2277c9" strokeWidth="2" />
      </svg>
      <span className="absolute right-[7px] bottom-[6px] text-[15px] leading-5 whitespace-nowrap text-[#d8d8d8]/80">
        https://blog.csdn.net/weixin_45000070
      </span>
    </div>
  );
}

export default function App() {
  return (
    <div className="relative flex h-screen w-full flex-col overflow-hidden bg-[#f0f0f0] font-['Open_Sans','Noto_Sans_CJK_SC',sans-serif] text-[16px] leading-5 text-black">
      <header className="bg-white text-[#999]">
        <div className="flex h-7 items-center gap-[7px] pr-[25px] pl-1">
          <DesignerLogo />
          <h1 className="flex-1">Qt Designer</h1>
          <div className="flex items-center gap-[44px]">
            <button type="button" aria-label="Minimize">
              <svg viewBox="0 0 14 14" className="h-[14px] w-[14px]" stroke="#888"><path d="M1 7.500h12" /></svg>
            </button>
            <button type="button" aria-label="Restore">
              <svg viewBox="0 0 14 14" className="h-[14px] w-[14px]" fill="none" stroke="#888">
                <path d="M1.500 3.500h9v10h-9zM3.500 3V1.500h9v10h-2" />
              </svg>
            </button>
            <button type="button" aria-label="Close">
              <svg viewBox="0 0 14 14" className="h-[14px] w-[14px]" stroke="#888"><path d="M1 1l12 12M13 1L1 13" /></svg>
            </button>
          </div>
        </div>
        <nav className="flex h-[27px] items-center gap-4 border-b border-[#ececec] pt-[2px] pl-2">
          {MENUS.map((m) => (
            <button key={m} type="button">
              {m === 'Form' ? <>F<u className="underline-offset-2">o</u>rm</> : <><u className="underline-offset-2">{m[0]}</u>{m.slice(1)}</>}
            </button>
          ))}
        </nav>
      </header>

      <div className="flex h-10 shrink-0 items-center border-b border-[#a8a8a8]">
        {TOOL_GROUPS.map((group, i) => (
          <div key={i} className={`flex h-full items-center pt-px ${i > 0 ? 'border-l border-[#a8a8a8]' : ''}`}>
            <span className={`h-[30px] border-l-2 border-dotted border-[#b0b0b0] ${i > 0 ? 'mr-[7px] ml-1' : 'mr-[6px] ml-1'}`} />
            {group.map(({ name, Icon, ...rest }) => (
              <button
                key={name}
                type="button"
                title={name}
                className={`flex h-[35px] w-[37px] items-center justify-center ${'active' in rest ? 'border border-[#90c8f6] bg-[#c0dcf3]' : ''}`}
              >
                <Icon />
              </button>
            ))}
          </div>
        ))}
      </div>

      <main className="flex min-h-0 flex-1">
        <WidgetBox />
        <div className="relative ml-[5px] min-w-0 flex-1 overflow-hidden border border-[#828790] bg-[#a0a0a0]">
          <FormWindow />
        </div>
        <RightDock />
      </main>
      <footer className="h-[25px] shrink-0" />

      <SelectResourceDialog />
      <EditResourcesDialog />
      <AddFilesDialog />

      {/* level meter docked to the screen edge */}
      <div className="absolute top-[267px] right-0 h-[74px] w-3 rounded-l bg-[#454c5c] pt-[9px] pl-1">
        <div className="h-[57px] w-[6px] bg-linear-to-b from-[#2f333d] from-20% via-[#c8cc5c] via-45% to-[#4fd0c8]">
          <div className="h-full bg-[repeating-linear-gradient(transparent_0_2px,#454c5c_2px_3px)]" />
        </div>
      </div>

      <Annotations />
      <ImeBar />

      {/* capture frame */}
      <div className="pointer-events-none absolute inset-0 border-x border-t border-dashed border-[#f84444]" />
      <div className="pointer-events-none absolute top-0 left-0 h-[65px] w-[65px] border-t-7 border-l-7 border-[#f84444]" />
      <div className="pointer-events-none absolute top-0 right-0 h-[65px] w-[65px] border-t-7 border-r-7 border-[#f84444]" />
      <div className="pointer-events-none absolute bottom-0 left-0 h-4 w-[7px] bg-[#f84444]" />
    </div>
  );
}
